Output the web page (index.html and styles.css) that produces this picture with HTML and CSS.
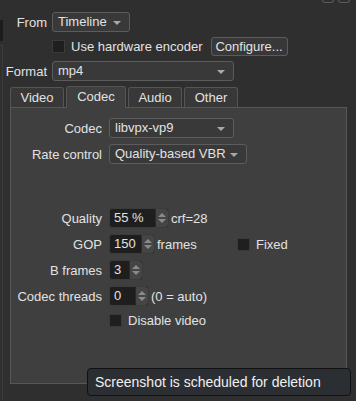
FILE: index.html
```html
<!DOCTYPE html>
<html lang="en">
<head>
    <meta charset="UTF-8">
    <title>Export - Codec</title>
    <link rel="stylesheet" href="styles.css">
</head>
<body>
    <div class="window">
        <div class="edge">
            <div class="edge-block"></div>
            <div class="edge-line"></div>
        </div>
        <div class="main">
            <div class="cutoff">
                <span class="cut-btn"></span>
                <span class="cut-btn"></span>
            </div>

            <div class="top-row">
                <span class="top-label">From</span>
                <div class="combo combo-from">Timeline<span class="arrow"></span></div>
            </div>
            <div class="top-row row-hw">
                <span class="top-label"></span>
                <span class="check"></span>
                <span class="check-text">Use hardware encoder</span>
                <button class="btn">Configure...</button>
            </div>
            <div class="top-row row-format">
                <span class="top-label">Format</span>
                <div class="combo combo-format">mp4<span class="arrow"></span></div>
            </div>

            <div class="tabs">
                <span class="tab">Video</span>
                <span class="tab active">Codec</span>
                <span class="tab">Audio</span>
                <span class="tab">Other</span>
            </div>

            <div class="panel">
                <div class="form-row">
                    <span class="label">Codec</span>
                    <div class="combo combo-codec">libvpx-vp9<span class="arrow"></span></div>
                </div>
                <div class="form-row">
                    <span class="label">Rate control</span>
                    <div class="combo combo-rate">Quality-based VBR<span class="arrow"></span></div>
                </div>

                <div class="form-row row-quality">
                    <span class="label">Quality</span>
                    <div class="spin spin-quality"><span class="spin-val">55 %</span><span class="spin-btns"><i class="up"></i><i class="down"></i></span></div>
                    <span class="after">crf=28</span>
                </div>
                <div class="form-row">
                    <span class="label">GOP</span>
                    <div class="spin spin-gop"><span class="spin-val">150</span><span class="spin-btns"><i class="up"></i><i class="down"></i></span></div>
                    <span class="after after-frames">frames</span>
                    <span class="check"></span>
                    <span class="check-text">Fixed</span>
                </div>
                <div class="form-row">
                    <span class="label">B frames</span>
                    <div class="spin spin-b"><span class="spin-val">3</span><span class="spin-btns"><i class="up"></i><i class="down"></i></span></div>
                </div>
                <div class="form-row row-threads">
                    <span class="label">Codec threads</span>
                    <div class="spin spin-threads"><span class="spin-val">0</span><span class="spin-btns"><i class="up"></i><i class="down"></i></span></div>
                    <span class="after">(0 = auto)</span>
                </div>
                <div class="form-row row-disable">
                    <span class="label"></span>
                    <span class="check"></span>
                    <span class="check-text">Disable video</span>
                </div>
            </div>
        </div>
    </div>

    <div class="tooltip">Screenshot is scheduled for deletion</div>
</body>
</html>
```

FILE: styles.css
```css
body {
    margin: 0;
    background: #2f2f2f;
    color: #e2e2e2;
    font-family: "Liberation Sans", Arial, sans-serif;
    font-size: 13px;
    width: 356px;
    height: 401px;
    overflow: hidden;
    position: relative;
}
.window {
    display: flex;
    height: 401px;
}
.edge {
    width: 3px;
    display: flex;
    flex-direction: column;
}
.edge-block {
    margin-top: 20px;
    height: 21px;
    background: #1c1c1c;
}
.edge-line {
    margin-top: 4px;
    flex: 1;
    border-right: 1px solid #3c3c3c;
    border-top: 1px solid #3c3c3c;
}
.main {
    flex: 1;
    display: flex;
    flex-direction: column;
}
.cutoff {
    height: 3px;
    display: flex;
    justify-content: flex-end;
    gap: 4px;
    padding-right: 6px;
}
.cut-btn {
    width: 10px;
    height: 2px;
    border: 1px solid #5a5a5a;
    border-top: none;
    border-radius: 0 0 3px 3px;
}
.top-row {
    display: flex;
    align-items: center;
    height: 20px;
    margin-top: 9px;
}
.row-hw { margin-top: 5px; height: 19px; }
.row-format { margin-top: 5px; }
.top-label {
    width: 44px;
    text-align: right;
    margin-right: 5px;
}
.combo {
    position: relative;
    box-sizing: border-box;
    height: 20px;
    line-height: 18px;
    padding-left: 5px;
    background: #393939;
    border: 1px solid #5c5c5c;
    border-radius: 3px;
}
.arrow {
    position: absolute;
    right: 8px;
    top: 8px;
    border-left: 4px solid transparent;
    border-right: 4px solid transparent;
    border-top: 4px solid #a8a8a8;
}
.combo-from { width: 78px; }
.combo-format { width: 182px; }
.combo-codec { width: 125px; }
.combo-rate { width: 138px; }
.check {
    box-sizing: border-box;
    width: 13px;
    height: 13px;
    background: #1f1f1f;
    border: 1px solid #3a3a3a;
    margin-right: 6px;
}
.check-text { margin-right: 8px; }
.btn {
    box-sizing: border-box;
    width: 77px;
    height: 19px;
    padding: 0;
    font: inherit;
    color: inherit;
    background: #383838;
    border: 1px solid #5c5c5c;
    border-radius: 3px;
}
.tabs {
    display: flex;
    align-items: flex-end;
    margin-top: 5px;
    padding-left: 7px;
    height: 21px;
    gap: 2px;
}
.tab {
    box-sizing: border-box;
    height: 20px;
    line-height: 19px;
    text-align: center;
    background: #383838;
    border: 1px solid #555;
    border-bottom: none;
    border-radius: 3px 3px 0 0;
    width: 54px;
}
.tab.active {
    height: 22px;
    width: 60px;
    background: #3f3f3f;
    margin-bottom: -1px;
    position: relative;
    line-height: 20px;
}
.panel {
    box-sizing: border-box;
    margin-left: 7px;
    width: 337px;
    height: 277px;
    background: #3f3f3f;
    border: 1px solid #575757;
    padding-top: 10px;
}
.form-row {
    display: flex;
    align-items: center;
    height: 20px;
    margin-bottom: 6px;
}
.row-quality { margin-top: 44px; }
.row-threads { margin-top: 1px; }
.row-disable { height: 16px; }
.label {
    width: 91px;
    text-align: right;
    margin-right: 7px;
}
.spin {
    box-sizing: border-box;
    display: flex;
    height: 20px;
    background: #1e1e1e;
    border: 1px solid #3b3b3b;
    border-radius: 3px;
}
.spin-val {
    flex: 1;
    line-height: 18px;
    padding-left: 4px;
}
.spin-btns {
    width: 12px;
    background: #454545;
    border-left: 1px solid #2a2a2a;
    border-radius: 0 3px 3px 0;
    display: flex;
    flex-direction: column;
    align-items: center;
    justify-content: center;
    gap: 2px;
}
.spin-btns i {
    border-left: 4px solid transparent;
    border-right: 4px solid transparent;
}
.spin-btns .up { border-bottom: 4px solid #8a8a8a; }
.spin-btns .down { border-top: 4px solid #8a8a8a; }
.spin-quality { width: 60px; }
.spin-gop { width: 46px; }
.spin-b { width: 34px; }
.spin-threads { width: 40px; }
.after { margin-left: 2px; }
.after-frames { width: 80px; }
.tooltip {
    position: absolute;
    left: 87px;
    top: 368px;
    box-sizing: border-box;
    width: 264px;
    height: 28px;
    line-height: 26px;
    padding-left: 7px;
    font-size: 14px;
    color: #f0f0f0;
    background: #2b2e33;
    border: 1px solid #111;
    border-radius: 4px;
}
```
